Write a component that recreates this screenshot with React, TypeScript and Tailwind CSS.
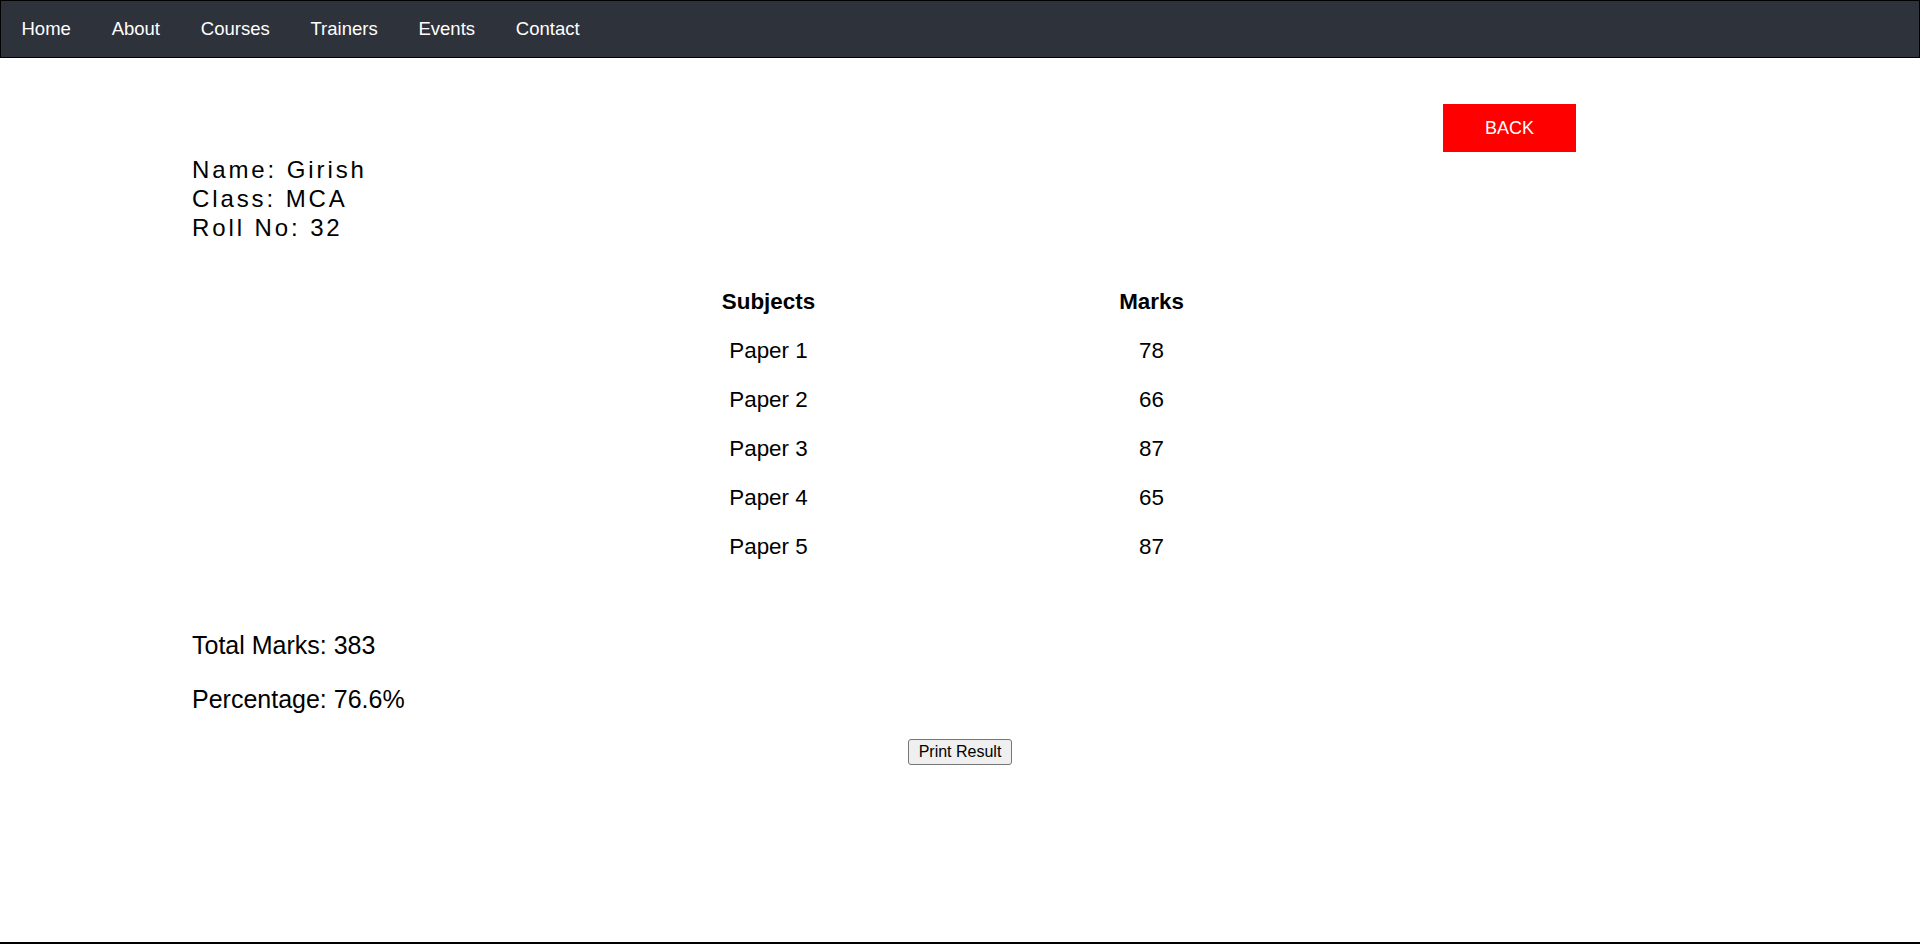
const links = ['Home', 'About', 'Courses', 'Trainers', 'Events', 'Contact'];

const papers = [
  { subject: 'Paper 1', marks: 78 },
  { subject: 'Paper 2', marks: 66 },
  { subject: 'Paper 3', marks: 87 },
  { subject: 'Paper 4', marks: 65 },
  { subject: 'Paper 5', marks: 87 },
];

const App = () => {
  const total = papers.reduce((sum, p) => sum + p.marks, 0);
  const percentage = (total / (papers.length * 100)) * 100;

  return (
    <div className="h-[944px] flex flex-col bg-white text-black font-['Liberation_Sans',Arial,sans-serif]">
      <nav className="h-[58px] shrink-0 border border-black bg-[#2e323b] flex items-center gap-[40.8px] pl-[20.5px]">
        {links.map((link) => (
          <a key={link} href="#" className="text-[18.5px] text-white">
            {link}
          </a>
        ))}
      </nav>

      <main className="flex-1 px-[192px]">
        <div className="flex justify-end mt-[46px] mr-[152px]">
          <button className="w-[133px] h-[48px] bg-[#ff0000] text-white text-[18px] uppercase">Back</button>
        </div>

        <div className="mt-[3px] text-[24px] leading-[29px] tracking-[2.9px]">
          <div>Name: Girish</div>
          <div>Class: MCA</div>
          <div>Roll No: 32</div>
        </div>

        <div className="mt-[35px] mx-auto w-[766px] grid grid-cols-2">
          <div className="h-[49px] flex items-center justify-center text-[22.4px] font-bold">Subjects</div>
          <div className="h-[49px] flex items-center justify-center text-[22.4px] font-bold">Marks</div>
          {papers.map((p) => (
            <div key={p.subject} className="contents">
              <div className="h-[49px] flex items-center justify-center text-[22.4px]">{p.subject}</div>
              <div className="h-[49px] flex items-center justify-center text-[22.4px]">{p.marks}</div>
            </div>
          ))}
        </div>

        <div className="mt-[59px] text-[25px] leading-[30px]">Total Marks: {total}</div>
        <div className="mt-[24px] text-[25px] leading-[30px]">Percentage: {percentage}%</div>

        <div className="mt-[25px] flex justify-center">
          <button className="h-[26px] px-[10px] text-[16px] bg-[#efefef] border border-[#767676] rounded-[3px] text-black">
            Print Result
          </button>
        </div>
      </main>

      <div className="h-[2px] shrink-0 bg-black" />
    </div>
  );
};

export default App;
